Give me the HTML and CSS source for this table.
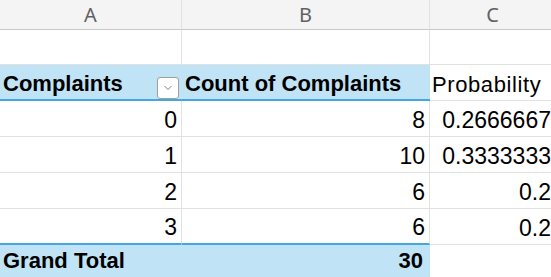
FILE: index.html
```html
<!DOCTYPE html>
<html lang="en">
<head>
    <meta charset="UTF-8">
    <meta name="viewport" content="width=device-width, initial-scale=1.0">
    <title>Complaints Pivot</title>
    <link rel="stylesheet" href="styles.css">
</head>
<body>
    <!-- Sheet grid -->
    <div class="sheet">
        <!-- Column letters -->
        <div class="col-head">A</div>
        <div class="col-head">B</div>
        <div class="col-head">C</div>

        <!-- Empty row -->
        <div class="cell"></div>
        <div class="cell"></div>
        <div class="cell"></div>

        <!-- Pivot header -->
        <div class="cell pivot-head">
            <span>Complaints</span>
            <button class="filter-btn" title="Filter">
                <svg width="10" height="6" viewBox="0 0 10 6"><path d="M1.5 1 L5 4.5 L8.5 1" fill="none" stroke="#808080" stroke-width="1"/></svg>
            </button>
        </div>
        <div class="cell pivot-head">Count of Complaints</div>
        <div class="cell label">Probability</div>

        <!-- Data rows -->
        <div class="cell num">0</div>
        <div class="cell num">8</div>
        <div class="cell num">0.2666667</div>

        <div class="cell num">1</div>
        <div class="cell num">10</div>
        <div class="cell num">0.3333333</div>

        <div class="cell num">2</div>
        <div class="cell num">6</div>
        <div class="cell num">0.2</div>

        <div class="cell num last">3</div>
        <div class="cell num last">6</div>
        <div class="cell num">0.2</div>

        <!-- Totals -->
        <div class="cell total">Grand Total</div>
        <div class="cell total num">30</div>
        <div class="cell"></div>
    </div>
</body>
</html>
```

FILE: styles.css
```css
/* General Styles */
body {
    margin: 0;
    background-color: #fff;
    font-family: 'Liberation Sans', Arial, sans-serif;
    color: #000;
    overflow: hidden;
}

/* Sheet grid */
.sheet {
    display: grid;
    grid-template-columns: 182px 248px 126px;
    grid-template-rows: 30px 35px 36px 36px 36px 36px 36px 36px;
}

.col-head {
    background-color: #f4f4f4;
    border-bottom: 1px solid #c8c8c8;
    border-right: 1px solid #e1e1e1;
    color: #616161;
    font-family: 'Noto Sans', sans-serif;
    font-size: 20px;
    display: flex;
    align-items: center;
    justify-content: center;
}

.cell {
    box-sizing: border-box;
    border-right: 1px solid #e1e1e1;
    border-bottom: 1px solid #e1e1e1;
    font-size: 22px;
    display: flex;
    align-items: flex-end;
    padding: 0 4px 2px 3px;
    white-space: nowrap;
}

/* Pivot table header */
.pivot-head {
    background-color: #c0e4f5;
    border-right: none;
    border-bottom: 2px solid #44a8e0;
    font-weight: bold;
    padding-bottom: 2px;
}

.filter-btn {
    margin-left: auto;
    margin-right: -1px;
    margin-bottom: -2px;
    width: 22px;
    height: 22px;
    padding: 0;
    background-color: #fff;
    border: 1px solid #a0a0a0;
    border-radius: 3px;
    display: flex;
    align-items: center;
    justify-content: center;
}

.label {
    padding-left: 2px;
    letter-spacing: 0.6px;
}

.num {
    justify-content: flex-end;
    font-size: 23px;
}

.last {
    border-bottom: 2px solid #44a8e0;
}

/* Grand total row */
.total {
    background-color: #c0e4f5;
    border-right: none;
    border-bottom: none;
    font-weight: bold;
    font-size: 22px;
    padding-bottom: 7px;
}

.total.num {
    padding-right: 7px;
}
```
